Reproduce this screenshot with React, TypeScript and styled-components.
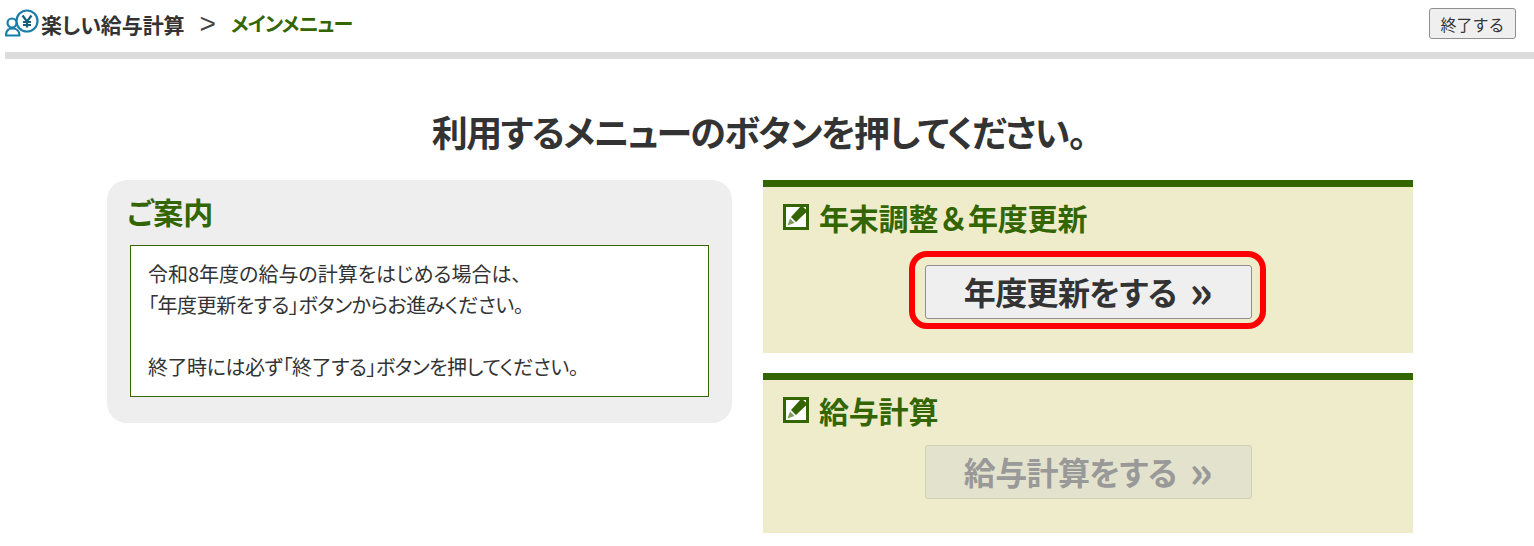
import React from 'react';
import styled, { createGlobalStyle } from 'styled-components';

const FONT = `"Noto Sans CJK JP", "Noto Sans", sans-serif`;

const GlobalStyle = createGlobalStyle`
  html, body {
    margin: 0;
    padding: 0;
    background: #fff;
    overflow: hidden;
  }
  body {
    font-family: ${FONT};
    font-feature-settings: "palt";
    color: #333;
  }
`;

const Page = styled.div`
  width: 1534px;
  height: 546px;
  overflow: hidden;
  box-sizing: border-box;
  padding-left: 5px;
`;

const Header = styled.header`
  display: flex;
  align-items: center;
  justify-content: space-between;
  height: 59px;
  box-sizing: border-box;
  border-bottom: 7px solid #dcdcdc;
  padding: 0 18px 4px 0;
`;

const Crumbs = styled.div`
  display: flex;
  align-items: center;
  font-size: 20px;
  font-weight: 700;
  line-height: 28px;
`;

const AppName = styled.span`
  color: #333;
  font-size: 21px;
  letter-spacing: -0.1px;
  margin-left: 2px;
`;

const Sep = styled.span`
  color: #444;
  font-family: "Liberation Sans", sans-serif;
  font-weight: 400;
  font-size: 28px;
  margin: 0 15px;
`;

const Current = styled.span`
  color: #336600;
  letter-spacing: -0.85px;
`;

const QuitButton = styled.button`
  font-family: ${FONT};
  font-feature-settings: normal;
  font-size: 16px;
  color: #333;
  width: 87px;
  height: 31px;
  margin-top: -1px;
  padding: 0;
  background: #efefef;
  border: 1px solid #8f8f8f;
  border-radius: 3px;
`;

const Title = styled.h1`
  margin: 50px 0 0;
  padding-right: 22px;
  text-align: center;
  font-size: 36px;
  line-height: 44px;
  font-weight: 700;
  letter-spacing: -1.5px;
  color: #333;
`;

const Columns = styled.div`
  display: flex;
  align-items: flex-start;
  gap: 31px;
  margin: 27px 0 0 102px;
`;

const Guide = styled.section`
  width: 625px;
  height: 243px;
  box-sizing: border-box;
  background: #eeeeee;
  border-radius: 20px;
  padding: 12px 23px 0;
`;

const GuideTitle = styled.h2`
  margin: 0 0 15px -3px;
  font-size: 30px;
  line-height: 38px;
  font-weight: 700;
  color: #336600;
`;

const GuideBody = styled.div`
  width: 579px;
  height: 152px;
  box-sizing: border-box;
  background: #fff;
  border: 1px solid #336600;
  padding: 12px 17px;
  font-size: 20px;
  line-height: 31px;
  color: #333;
`;

const GuideLine = styled.span<{ $tight?: boolean }>`
  display: block;
  min-height: 31px;
  letter-spacing: ${(p) => (p.$tight ? '-0.45px' : '0')};
`;

const Menus = styled.div`
  width: 650px;
  display: flex;
  flex-direction: column;
  gap: 20px;
`;

const MenuCard = styled.section<{ $height: number }>`
  height: ${(p) => p.$height}px;
  box-sizing: border-box;
  background: #eeeccb;
  border-top: 7px solid #336600;
  padding: 11px 20px 0;
`;

const MenuTitle = styled.h2`
  display: flex;
  align-items: center;
  gap: 10px;
  margin: 0;
  font-size: 30px;
  font-feature-settings: normal;
  line-height: 38px;
  font-weight: 700;
  letter-spacing: -0.2px;
  color: #336600;
`;

const ButtonRow = styled.div<{ $top: number }>`
  display: flex;
  justify-content: center;
  margin-top: ${(p) => p.$top}px;
`;

const Highlight = styled.div`
  border: 6px solid #ff0000;
  border-radius: 18px;
  margin-right: 2px;
  padding: 8px 8px 4px 10px;
  display: flex;
`;

const MenuButton = styled.button<{ $disabled?: boolean }>`
  display: flex;
  align-items: center;
  justify-content: center;
  width: 327px;
  height: 54px;
  padding: 0 0 3px;
  box-sizing: border-box;
  font-family: ${FONT};
  font-feature-settings: "palt";
  font-size: 32px;
  font-weight: 700;
  line-height: 1;
  letter-spacing: -0.6px;
  color: ${(p) => (p.$disabled ? '#999999' : '#333')};
  background: ${(p) => (p.$disabled ? '#e3e2cd' : '#efefef')};
  border: 1px solid ${(p) => (p.$disabled ? '#cfcfba' : '#8f8f8f')};
  border-radius: 3px;
`;

const Arrow = styled.span`
  margin-left: 13px;
  font-size: 44px;
  line-height: 0;
  position: relative;
  top: -2px;
`;

const LogoIcon = () => (
  <svg width="34" height="30" viewBox="0 0 34 30" fill="none" stroke="#1a7fa8" strokeWidth="2.2">
    <circle cx="22" cy="12" r="10.5" fill="#fff" />
    <path d="M17.500 6.500l4.500 6 4.500-6M22 12.500v6M18 13h8M18 16h8" strokeWidth="2.2" stroke="#15607f" />
    <circle cx="7" cy="14" r="4.5" fill="#fff" />
    <path d="M1 26.500c0-4.500 2.500-7 6.500-7s7 2.500 7 7z" fill="#fff" strokeLinejoin="round" />
  </svg>
);

const EditIcon = () => (
  <svg width="26" height="26" viewBox="0 0 26 26">
    <rect x="0" y="0" width="26" height="26" fill="#336600" />
    <rect x="3" y="3" width="20" height="20" fill="#fff" />
    <path d="M18.500 1.500L24.500 7 13 18l-5-5z" fill="#336600" />
    <path d="M7 14.500l4.500 4.500L4.500 21.500z" fill="#7c9f5c" />
  </svg>
);

const App: React.FC = () => {
  return (
    <Page>
      <GlobalStyle />
      <Header>
        <Crumbs>
          <LogoIcon />
          <AppName>楽しい給与計算</AppName>
          <Sep>&gt;</Sep>
          <Current>メインメニュー</Current>
        </Crumbs>
        <QuitButton>終了する</QuitButton>
      </Header>
      <Title>利用するメニューのボタンを押してください。</Title>
      <Columns>
        <Guide>
          <GuideTitle>ご案内</GuideTitle>
          <GuideBody>
            <GuideLine>令和8年度の給与の計算をはじめる場合は、</GuideLine>
            <GuideLine $tight>「年度更新をする」ボタンからお進みください。</GuideLine>
            <GuideLine />
            <GuideLine $tight>終了時には必ず「終了する」ボタンを押してください。</GuideLine>
          </GuideBody>
        </Guide>
        <Menus>
          <MenuCard $height={173}>
            <MenuTitle>
              <EditIcon />
              年末調整＆年度更新
            </MenuTitle>
            <ButtonRow $top={15}>
              <Highlight>
                <MenuButton>
                  年度更新をする<Arrow>»</Arrow>
                </MenuButton>
              </Highlight>
            </ButtonRow>
          </MenuCard>
          <MenuCard $height={160}>
            <MenuTitle>
              <EditIcon />
              給与計算
            </MenuTitle>
            <ButtonRow $top={16}>
              <MenuButton $disabled disabled>
                給与計算をする<Arrow>»</Arrow>
              </MenuButton>
            </ButtonRow>
          </MenuCard>
        </Menus>
      </Columns>
    </Page>
  );
};

export default App;
